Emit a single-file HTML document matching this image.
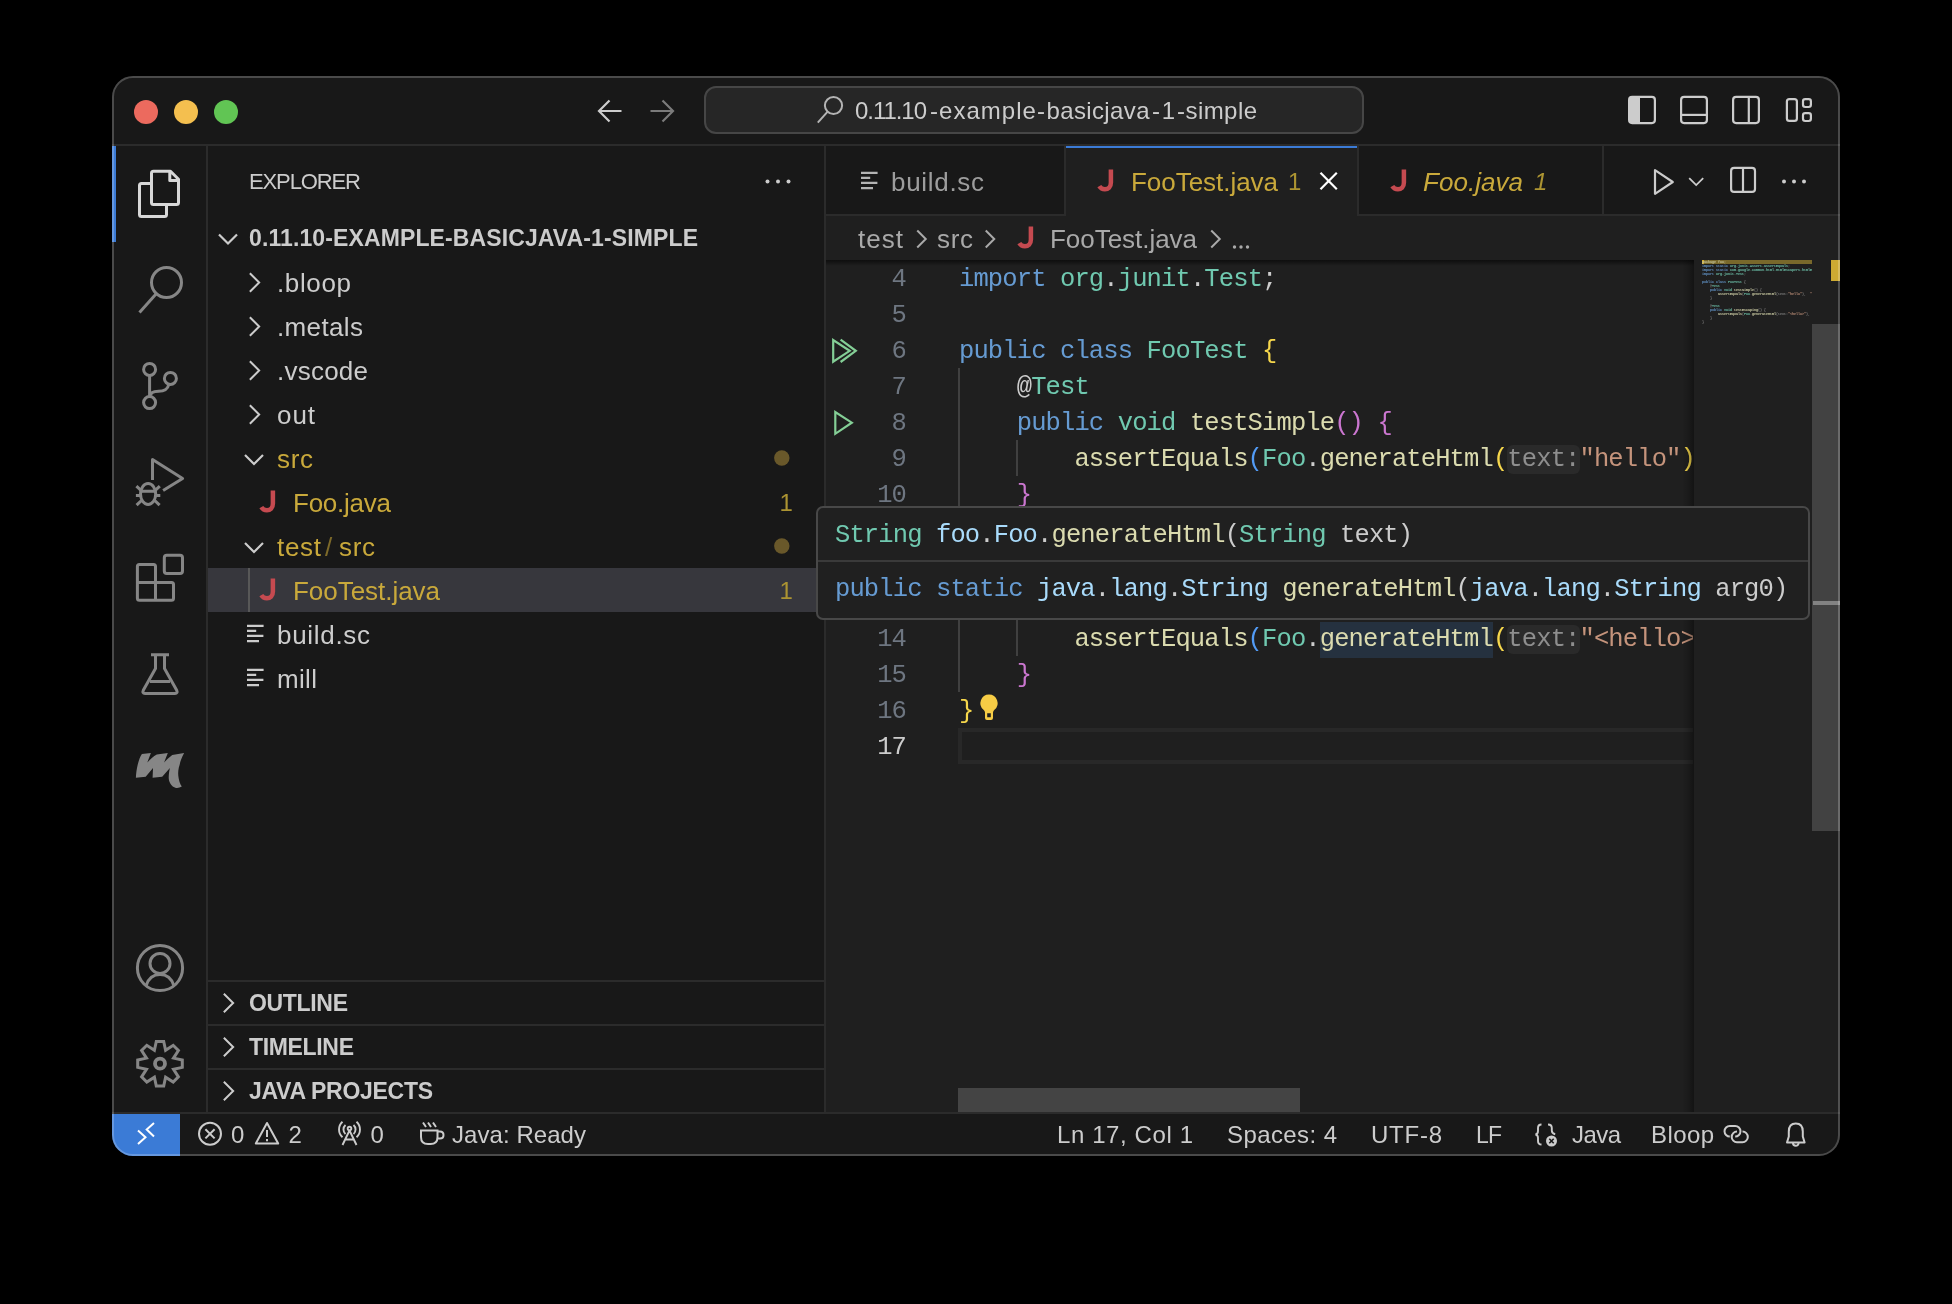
<!DOCTYPE html>
<html><head><meta charset="utf-8"><title>VS Code</title><style>
html,body{margin:0;padding:0;background:#000;}
body{width:1952px;height:1304px;overflow:hidden;position:relative;font-family:"Liberation Sans",sans-serif;}
#c{position:absolute;left:0;top:0;width:1952px;height:1304px;will-change:transform;clip-path:inset(76px 112px 148px 112px round 21px);}
#c>div,#c>span,#c>svg{position:absolute;}
.t{white-space:pre;display:block;}
.m{font-family:"Liberation Mono",monospace;}
.hint{background:#2a2a2a;color:#8e8e8e;border-radius:6px;}
.sym{background:#25313f;display:inline-block;height:36px;}
#f{position:absolute;left:112px;top:76px;width:1728px;height:1080px;box-sizing:border-box;border:2px solid rgba(255,255,255,.22);border-radius:21px;}
</style></head><body>
<div id="c">
<div style="left:112px;top:76px;width:1728px;height:1080px;background:#181818;"></div>
<div style="left:112px;top:144px;width:1728px;height:2px;background:#2b2b2b;"></div>
<div style="left:206px;top:146px;width:2px;height:966px;background:#2b2b2b;"></div>
<div style="left:824px;top:146px;width:2px;height:966px;background:#2b2b2b;"></div>
<div style="left:826px;top:146px;width:1014px;height:70px;background:#181818;"></div>
<div style="left:826px;top:214px;width:1014px;height:2px;background:#2b2b2b;"></div>
<div style="left:826px;top:216px;width:1014px;height:896px;background:#1f1f1f;"></div>
<div style="left:112px;top:1112px;width:1728px;height:2px;background:#2b2b2b;"></div>
<div style="left:112px;top:146px;width:4px;height:96px;background:#3b7bd6;"></div>
<div style="left:134px;top:100px;width:24px;height:24px;border-radius:50%;background:#ec6a5e"></div>
<div style="left:174px;top:100px;width:24px;height:24px;border-radius:50%;background:#f4bf4f"></div>
<div style="left:214px;top:100px;width:24px;height:24px;border-radius:50%;background:#61c554"></div>
<div style="left:704px;top:86px;width:660px;height:48px;box-sizing:border-box;border:2px solid #464646;border-radius:12px;background:#262626"></div>
<span id="t0" class="t" style="left:855px;top:93.0px;height:36px;line-height:36px;font-size:24px;color:#cccccc;letter-spacing:-1.049px;">0.11.10</span>
<span id="t1" class="t" style="left:930px;top:93.0px;height:36px;line-height:36px;font-size:24px;color:#cccccc;letter-spacing:1.037px;">-example-</span>
<span id="t2" class="t" style="left:1046.5px;top:93.0px;height:36px;line-height:36px;font-size:24px;color:#cccccc;letter-spacing:0.367px;">basicjava</span>
<span id="t3" class="t" style="left:1152px;top:93.0px;height:36px;line-height:36px;font-size:24px;color:#cccccc;letter-spacing:1.828px;">-1-</span>
<span id="t4" class="t" style="left:1185.5px;top:93.0px;height:36px;line-height:36px;font-size:24px;color:#cccccc;letter-spacing:0.428px;">simple</span>
<span id="t5" class="t" style="left:249px;top:164.5px;height:33px;line-height:33px;font-size:22px;color:#cccccc;letter-spacing:-1.118px;">EXPLORER</span>
<span id="t6" class="t" style="left:249px;top:220.7px;height:34px;line-height:34px;font-size:23px;color:#cccccc;font-weight:700;letter-spacing:0.115px;">0.11.10-EXAMPLE-BASICJAVA-1-SIMPLE</span>
<span id="t7" class="t" style="left:277px;top:263.5px;height:39px;line-height:39px;font-size:26px;color:#cccccc;letter-spacing:0.631px;">.bloop</span>
<span id="t8" class="t" style="left:277px;top:307.5px;height:39px;line-height:39px;font-size:26px;color:#cccccc;letter-spacing:0.365px;">.metals</span>
<span id="t9" class="t" style="left:277px;top:351.5px;height:39px;line-height:39px;font-size:26px;color:#cccccc;letter-spacing:0.232px;">.vscode</span>
<span id="t10" class="t" style="left:277px;top:395.5px;height:39px;line-height:39px;font-size:26px;color:#cccccc;letter-spacing:0.922px;">out</span>
<span id="t11" class="t" style="left:277px;top:439.5px;height:39px;line-height:39px;font-size:26px;color:#c9a93b;letter-spacing:0.664px;">src</span>
<div style="left:208px;top:568px;width:616px;height:44px;background:#37373d;"></div>
<div style="left:248px;top:568px;width:2px;height:44px;background:#585858;"></div>
<span id="t12" class="t" style="left:277px;top:527.5px;height:39px;line-height:39px;font-size:26px;color:#c9a93b;letter-spacing:0.693px;">test</span>
<span id="t13" class="t" style="left:325px;top:527.5px;height:39px;line-height:39px;font-size:26px;color:#7d6a2a;">/</span>
<span id="t14" class="t" style="left:339px;top:527.5px;height:39px;line-height:39px;font-size:26px;color:#c9a93b;letter-spacing:0.664px;">src</span>
<span id="t15" class="t" style="left:293px;top:483.5px;height:39px;line-height:39px;font-size:26px;color:#c9a93b;letter-spacing:-0.248px;">Foo.java</span>
<span id="t16" class="t" style="left:293px;top:571.5px;height:39px;line-height:39px;font-size:26px;color:#c9a93b;letter-spacing:-0.037px;">FooTest.java</span>
<span id="t17" class="t" style="left:277px;top:615.5px;height:39px;line-height:39px;font-size:26px;color:#cccccc;letter-spacing:0.692px;">build.sc</span>
<span id="t18" class="t" style="left:277px;top:659.5px;height:39px;line-height:39px;font-size:26px;color:#cccccc;letter-spacing:0.333px;">mill</span>
<span id="t19" class="t" style="left:779.5px;top:485.0px;height:36px;line-height:36px;font-size:24px;color:#ac9432;">1</span>
<span id="t20" class="t" style="left:779.5px;top:573.0px;height:36px;line-height:36px;font-size:24px;color:#ac9432;">1</span>
<div style="left:208px;top:980px;width:616px;height:2px;background:#2b2b2b;"></div>
<span id="t21" class="t" style="left:249px;top:985.7px;height:34px;line-height:34px;font-size:23px;color:#cccccc;font-weight:700;letter-spacing:-0.326px;">OUTLINE</span>
<div style="left:208px;top:1024px;width:616px;height:2px;background:#2b2b2b;"></div>
<span id="t22" class="t" style="left:249px;top:1029.7px;height:34px;line-height:34px;font-size:23px;color:#cccccc;font-weight:700;letter-spacing:-0.335px;">TIMELINE</span>
<div style="left:208px;top:1068px;width:616px;height:2px;background:#2b2b2b;"></div>
<span id="t23" class="t" style="left:249px;top:1073.7px;height:34px;line-height:34px;font-size:23px;color:#cccccc;font-weight:700;letter-spacing:-0.288px;">JAVA PROJECTS</span>
<div style="left:1064px;top:146px;width:2px;height:68px;background:#2b2b2b;"></div>
<div style="left:1066px;top:146px;width:291px;height:70px;background:#1f1f1f;"></div>
<div style="left:1066px;top:146px;width:291px;height:2px;background:#3b7bd6;"></div>
<div style="left:1357px;top:146px;width:2px;height:68px;background:#2b2b2b;"></div>
<div style="left:1602px;top:146px;width:2px;height:68px;background:#2b2b2b;"></div>
<span id="t24" class="t" style="left:891px;top:162.5px;height:39px;line-height:39px;font-size:26px;color:#9d9d9d;letter-spacing:0.692px;">build.sc</span>
<span id="t25" class="t" style="left:1131px;top:162.5px;height:39px;line-height:39px;font-size:26px;color:#c9a93b;letter-spacing:-0.037px;">FooTest.java</span>
<span id="t26" class="t" style="left:1288px;top:164.0px;height:36px;line-height:36px;font-size:24px;color:#ac9432;">1</span>
<span id="t27" class="t" style="left:1423px;top:162.5px;height:39px;line-height:39px;font-size:26px;color:#c9a93b;font-style:italic;letter-spacing:0.038px;">Foo.java</span>
<span id="t28" class="t" style="left:1534px;top:164.0px;height:36px;line-height:36px;font-size:24px;color:#ac9432;font-style:italic;">1</span>
<span id="t29" class="t" style="left:858px;top:219.5px;height:39px;line-height:39px;font-size:26px;color:#a9a9a9;letter-spacing:1.026px;">test</span>
<span id="t30" class="t" style="left:937px;top:219.5px;height:39px;line-height:39px;font-size:26px;color:#a9a9a9;letter-spacing:0.664px;">src</span>
<span id="t31" class="t" style="left:1050px;top:219.5px;height:39px;line-height:39px;font-size:26px;color:#a9a9a9;letter-spacing:-0.037px;">FooTest.java</span>
<div style="left:958px;top:728px;width:735px;height:36px;box-sizing:border-box;border:4px solid #282828;border-right:none"></div>
<div style="left:958px;top:368px;width:2px;height:324px;background:#404040;"></div>
<div style="left:1016px;top:440px;width:2px;height:36px;background:#404040;"></div>
<div style="left:1016px;top:620px;width:2px;height:36px;background:#404040;"></div>
<span class="t m" style="left:826px;width:80px;text-align:right;top:262px;height:36px;line-height:36px;font-size:25.5px;letter-spacing:-0.874px;color:#6e7681">4</span>
<span class="t m code" style="left:959px;top:262px;height:36px;line-height:36px;font-size:25.5px;letter-spacing:-0.874px;width:734px;overflow:hidden;color:#cccccc"><span style="color:#669bd2">import</span> <span style="color:#70c9b0">org</span><span style="color:#cccccc">.</span><span style="color:#70c9b0">junit</span><span style="color:#cccccc">.</span><span style="color:#70c9b0">Test</span><span style="color:#cccccc">;</span></span>
<span class="t m" style="left:826px;width:80px;text-align:right;top:298px;height:36px;line-height:36px;font-size:25.5px;letter-spacing:-0.874px;color:#6e7681">5</span>
<span class="t m" style="left:826px;width:80px;text-align:right;top:334px;height:36px;line-height:36px;font-size:25.5px;letter-spacing:-0.874px;color:#6e7681">6</span>
<span class="t m code" style="left:959px;top:334px;height:36px;line-height:36px;font-size:25.5px;letter-spacing:-0.874px;width:734px;overflow:hidden;color:#cccccc"><span style="color:#669bd2">public class</span> <span style="color:#70c9b0">FooTest</span> <span style="color:#f6d74c">{</span></span>
<span class="t m" style="left:826px;width:80px;text-align:right;top:370px;height:36px;line-height:36px;font-size:25.5px;letter-spacing:-0.874px;color:#6e7681">7</span>
<span class="t m code" style="left:959px;top:370px;height:36px;line-height:36px;font-size:25.5px;letter-spacing:-0.874px;width:734px;overflow:hidden;color:#cccccc">    <span style="color:#cccccc">@</span><span style="color:#70c9b0">Test</span></span>
<span class="t m" style="left:826px;width:80px;text-align:right;top:406px;height:36px;line-height:36px;font-size:25.5px;letter-spacing:-0.874px;color:#6e7681">8</span>
<span class="t m code" style="left:959px;top:406px;height:36px;line-height:36px;font-size:25.5px;letter-spacing:-0.874px;width:734px;overflow:hidden;color:#cccccc">    <span style="color:#669bd2">public</span> <span style="color:#70c9b0">void</span> <span style="color:#dbdbaf">testSimple</span><span style="color:#cb76d0">()</span> <span style="color:#cb76d0">{</span></span>
<span class="t m" style="left:826px;width:80px;text-align:right;top:442px;height:36px;line-height:36px;font-size:25.5px;letter-spacing:-0.874px;color:#6e7681">9</span>
<span class="t m code" style="left:959px;top:442px;height:36px;line-height:36px;font-size:25.5px;letter-spacing:-0.874px;width:734px;overflow:hidden;color:#cccccc">        <span style="color:#dbdbaf">assertEquals</span><span style="color:#529bf5">(</span><span style="color:#70c9b0">Foo</span><span style="color:#cccccc">.</span><span style="color:#dbdbaf">generateHtml</span><span style="color:#f6d74c">(</span><span class="hint">text:</span><span style="color:#c5947c">&quot;hello&quot;</span><span style="color:#f6d74c">)</span><span style="color:#cccccc">, </span><span style="color:#c5947c">&quot;&lt;h1&gt;hello&lt;/h1&gt;&quot;</span><span style="color:#529bf5">)</span><span style="color:#cccccc">;</span></span>
<span class="t m" style="left:826px;width:80px;text-align:right;top:478px;height:36px;line-height:36px;font-size:25.5px;letter-spacing:-0.874px;color:#6e7681">10</span>
<span class="t m code" style="left:959px;top:478px;height:36px;line-height:36px;font-size:25.5px;letter-spacing:-0.874px;width:734px;overflow:hidden;color:#cccccc">    <span style="color:#cb76d0">}</span></span>
<span class="t m" style="left:826px;width:80px;text-align:right;top:514px;height:36px;line-height:36px;font-size:25.5px;letter-spacing:-0.874px;color:#6e7681">11</span>
<span class="t m" style="left:826px;width:80px;text-align:right;top:550px;height:36px;line-height:36px;font-size:25.5px;letter-spacing:-0.874px;color:#6e7681">12</span>
<span class="t m" style="left:826px;width:80px;text-align:right;top:586px;height:36px;line-height:36px;font-size:25.5px;letter-spacing:-0.874px;color:#6e7681">13</span>
<span class="t m" style="left:826px;width:80px;text-align:right;top:622px;height:36px;line-height:36px;font-size:25.5px;letter-spacing:-0.874px;color:#6e7681">14</span>
<span class="t m code" style="left:959px;top:622px;height:36px;line-height:36px;font-size:25.5px;letter-spacing:-0.874px;width:734px;overflow:hidden;color:#cccccc">        <span style="color:#dbdbaf">assertEquals</span><span style="color:#529bf5">(</span><span style="color:#70c9b0">Foo</span><span style="color:#cccccc">.</span><span class="sym"><span style="color:#dbdbaf">generateHtml</span></span><span style="color:#f6d74c">(</span><span class="hint">text:</span><span style="color:#c5947c">&quot;&lt;hello&gt;&quot;</span><span style="color:#f6d74c">)</span><span style="color:#cccccc">, </span><span style="color:#c5947c">&quot;&lt;h1&gt;&amp;lt;hello&amp;gt;&lt;/h1&gt;&quot;</span><span style="color:#529bf5">)</span><span style="color:#cccccc">;</span></span>
<span class="t m" style="left:826px;width:80px;text-align:right;top:658px;height:36px;line-height:36px;font-size:25.5px;letter-spacing:-0.874px;color:#6e7681">15</span>
<span class="t m code" style="left:959px;top:658px;height:36px;line-height:36px;font-size:25.5px;letter-spacing:-0.874px;width:734px;overflow:hidden;color:#cccccc">    <span style="color:#cb76d0">}</span></span>
<span class="t m" style="left:826px;width:80px;text-align:right;top:694px;height:36px;line-height:36px;font-size:25.5px;letter-spacing:-0.874px;color:#6e7681">16</span>
<span class="t m code" style="left:959px;top:694px;height:36px;line-height:36px;font-size:25.5px;letter-spacing:-0.874px;width:734px;overflow:hidden;color:#cccccc"><span style="color:#f6d74c">}</span></span>
<span class="t m" style="left:826px;width:80px;text-align:right;top:730px;height:36px;line-height:36px;font-size:25.5px;letter-spacing:-0.874px;color:#cccccc">17</span>
<div style="left:826px;top:260px;width:986px;height:6px;background:linear-gradient(#0000008c,#00000000)"></div>
<div style="left:1682px;top:260px;width:12px;height:852px;background:linear-gradient(90deg,#00000000,#00000026 50%,#00000060)"></div>
<div style="left:1694px;top:260px;width:118px;height:852px;background:#1f1f1f;"></div>
<div style="left:1812px;top:324px;width:28px;height:507px;background:#424242;"></div>
<div style="left:1831px;top:260px;width:9px;height:21px;background:#cdaa32;"></div>
<div style="left:1813px;top:601px;width:27px;height:4px;background:#828282;"></div>
<div style="left:958px;top:1088px;width:342px;height:24px;background:#444444;"></div>
<div style="left:1702px;top:260px;width:110px;height:4px;background:#78682b;"></div>
<div style="left:1702px;top:260px;width:2px;height:4px;background:#d0aa2c;"></div>
<div style="left:1702px;top:260px;width:110px;height:70px;overflow:hidden"><div class="m" style="transform:scale(.13889);transform-origin:0 0;width:1400px;white-space:pre;font-size:24px;line-height:28.8px;font-weight:700;opacity:.95"><span style="color:#c9c9a0">package foo;</span>
<span style="color:#669bd2">import static</span> <span style="color:#70c9b0">org.junit.Assert.assertEquals</span><span style="color:#888888">;</span>
<span style="color:#669bd2">import static</span> <span style="color:#70c9b0">com.google.common.html.HtmlEscapers.htmlEscaper</span><span style="color:#888888">;</span>
<span style="color:#669bd2">import</span> <span style="color:#70c9b0">org.junit.Test</span><span style="color:#888888">;</span>

<span style="color:#669bd2">public class</span> <span style="color:#70c9b0">FooTest</span> <span style="color:#888888">{</span>
    <span style="color:#888888">@</span><span style="color:#70c9b0">Test</span>
    <span style="color:#669bd2">public</span> <span style="color:#70c9b0">void</span> <span style="color:#dbdbaf">testSimple</span><span style="color:#888888">() {</span>
        <span style="color:#dbdbaf">assertEquals</span><span style="color:#888888">(</span><span style="color:#70c9b0">Foo</span><span style="color:#888888">.</span><span style="color:#dbdbaf">generateHtml</span><span style="color:#888888">(text:</span><span style="color:#c5947c">&quot;hello&quot;</span><span style="color:#888888">),</span>  <span style="color:#c5947c">&quot;&lt;h1&gt;hello&lt;/h1&gt;&quot;</span><span style="color:#888888">);</span>
    <span style="color:#888888">}</span>

    <span style="color:#888888">@</span><span style="color:#70c9b0">Test</span>
    <span style="color:#669bd2">public</span> <span style="color:#70c9b0">void</span> <span style="color:#dbdbaf">testEscaping</span><span style="color:#888888">() {</span>
        <span style="color:#dbdbaf">assertEquals</span><span style="color:#888888">(</span><span style="color:#70c9b0">Foo</span><span style="color:#888888">.</span><span style="color:#dbdbaf">generateHtml</span><span style="color:#888888">(text:</span><span style="color:#c5947c">&quot;&lt;hello&gt;&quot;</span><span style="color:#888888">),</span> <span style="color:#c5947c">&quot;&lt;h1&gt;&amp;lt;hello&amp;gt;&lt;/h1&gt;&quot;</span><span style="color:#888888">);</span>
    <span style="color:#888888">}</span>
<span style="color:#888888">}</span></div></div>
<div style="left:816px;top:506px;width:994px;height:114px;box-sizing:border-box;border:2px solid #484848;border-radius:7px;background:#202020"></div>
<div style="left:818px;top:560px;width:990px;height:2px;background:#3a3a3a;"></div>
<span class="t m" style="left:835px;top:518px;height:36px;line-height:36px;font-size:25.5px;letter-spacing:-0.874px;color:#cccccc"><span style="color:#70c9b0">String</span> <span style="color:#a9dbfb">foo</span><span style="color:#cccccc">.</span><span style="color:#a9dbfb">Foo</span><span style="color:#cccccc">.</span><span style="color:#dbdbaf">generateHtml</span><span style="color:#cccccc">(</span><span style="color:#70c9b0">String</span><span style="color:#cccccc"> text)</span></span>
<span class="t m" style="left:835px;top:572px;height:36px;line-height:36px;font-size:25.5px;letter-spacing:-0.874px;color:#cccccc"><span style="color:#669bd2">public static</span> <span style="color:#a9dbfb">java</span><span style="color:#cccccc">.</span><span style="color:#a9dbfb">lang</span><span style="color:#cccccc">.</span><span style="color:#a9dbfb">String</span> <span style="color:#dbdbaf">generateHtml</span><span style="color:#cccccc">(</span><span style="color:#a9dbfb">java</span><span style="color:#cccccc">.</span><span style="color:#a9dbfb">lang</span><span style="color:#cccccc">.</span><span style="color:#a9dbfb">String</span><span style="color:#cccccc"> arg0)</span></span>
<div style="left:112px;top:1114px;width:68px;height:42px;background:#3b7bd6;"></div>
<span id="t32" class="t" style="left:231px;top:1117.0px;height:36px;line-height:36px;font-size:24px;color:#cccccc;">0</span>
<span id="t33" class="t" style="left:288.5px;top:1117.0px;height:36px;line-height:36px;font-size:24px;color:#cccccc;">2</span>
<span id="t34" class="t" style="left:370.5px;top:1117.0px;height:36px;line-height:36px;font-size:24px;color:#cccccc;">0</span>
<span id="t35" class="t" style="left:452px;top:1117.0px;height:36px;line-height:36px;font-size:24px;color:#cccccc;letter-spacing:0.059px;">Java: Ready</span>
<span id="t36" class="t" style="left:1057px;top:1117.0px;height:36px;line-height:36px;font-size:24px;color:#cccccc;letter-spacing:0.598px;">Ln 17, Col 1</span>
<span id="t37" class="t" style="left:1227px;top:1117.0px;height:36px;line-height:36px;font-size:24px;color:#cccccc;letter-spacing:0.408px;">Spaces: 4</span>
<span id="t38" class="t" style="left:1371px;top:1117.0px;height:36px;line-height:36px;font-size:24px;color:#cccccc;letter-spacing:0.750px;">UTF-8</span>
<span id="t39" class="t" style="left:1476px;top:1118.0px;height:34px;line-height:34px;font-size:23px;color:#cccccc;letter-spacing:-0.844px;">LF</span>
<span id="t40" class="t" style="left:1572px;top:1117.0px;height:36px;line-height:36px;font-size:24px;color:#cccccc;letter-spacing:-0.568px;">Java</span>
<span id="t41" class="t" style="left:1651px;top:1117.0px;height:36px;line-height:36px;font-size:24px;color:#cccccc;letter-spacing:0.402px;">Bloop</span>
<svg width="1952" height="1304" viewBox="0 0 1952 1304" style="left:0;top:0" stroke-linecap="butt">
<path d="M621.5 111H599.5M609.5 100.5L599 111L609.5 121.5" stroke="#cccccc" stroke-width="2.2" fill="none"/>
<path d="M650.5 111H672.5M662.5 100.5L673 111L662.5 121.5" stroke="#7b7b7b" stroke-width="2.2" fill="none"/>
<circle cx="833.5" cy="105.5" r="8.6" stroke="#b4b4b4" stroke-width="2" fill="none"/><path d="M827.4 111.8L817.8 122.6" stroke="#b4b4b4" stroke-width="2"/>
<rect x="1629.1" y="96.9" width="25.8" height="26.2" rx="3" stroke="#cccccc" stroke-width="2.2" fill="none"/><path d="M1629 98h11v24h-11z" fill="#cccccc"/>
<rect x="1681.1" y="96.9" width="25.8" height="26.2" rx="3" stroke="#cccccc" stroke-width="2.2" fill="none"/><path d="M1681 114.900h26" stroke="#cccccc" stroke-width="2.2"/>
<rect x="1733.1" y="96.9" width="25.8" height="26.2" rx="3" stroke="#cccccc" stroke-width="2.2" fill="none"/><path d="M1748.800 97v26" stroke="#cccccc" stroke-width="2.2"/>
<rect x="1786.9" y="99.1" width="10" height="21.8" rx="2.5" stroke="#cccccc" stroke-width="2.2" fill="none"/><rect x="1803" y="99.1" width="7.9" height="7.9" rx="2.2" stroke="#cccccc" stroke-width="2.2" fill="none"/><rect x="1803" y="113.1" width="7.9" height="7.9" rx="2.2" stroke="#cccccc" stroke-width="2.2" fill="none"/>
<path d="M153.5 171.3H170.5L178.5 179.3V202.5Q178.5 204.5 176.5 204.5H153.5Q151.5 204.5 151.5 202.5V173.3Q151.5 171.3 153.5 171.3ZM169.8 171.5V180.5H178.3" stroke="#d7d7d7" stroke-width="3" fill="none" stroke-linejoin="round"/><path d="M151 183.5H141.5Q139.5 183.5 139.5 185.5V214.5Q139.5 216.5 141.5 216.5H164.5Q166.5 216.5 166.5 214.5V205" stroke="#d7d7d7" stroke-width="3" fill="none"/>
<circle cx="166.5" cy="282.5" r="15" stroke="#868686" stroke-width="3" fill="none"/><path d="M156 294L139.5 312.5" stroke="#868686" stroke-width="3"/>
<g stroke="#868686" stroke-width="3" fill="none"><circle cx="149.6" cy="369.4" r="6"/><circle cx="149.6" cy="402.6" r="6"/><circle cx="170.4" cy="378.4" r="6"/><path d="M149.6 375.5V396.5M168.8 384.5C167.5 390.5 163 391.2 158.5 391.2C153.5 391.2 150 393 149.8 397"/></g>
<g stroke="#868686" stroke-width="3" fill="none" stroke-linejoin="round"><path d="M152.500 480V459.600L182.600 478.400L163.100 490.500"/><ellipse cx="148.1" cy="494" rx="7.6" ry="10.5"/><path d="M140.700 491.200H155.500M135.900 495.500H140.500M155.700 495.500H160.300M136.400 486.100L141 490.400M159.800 486.100L155.200 490.400M136.600 505.200L142 500M159.600 505.200L154.200 500"/></g>
<g stroke="#868686" stroke-width="3" fill="none" stroke-linejoin="round"><path d="M139.4 564.5H153.5Q155.5 564.5 155.5 566.5V582.5H171.5Q173.5 582.5 173.5 584.5V598.3Q173.5 600.3 171.5 600.3H139.4Q137.4 600.3 137.4 598.3V566.5Q137.4 564.5 139.4 564.5ZM137.4 582.5H155.5V600.3"/><rect x="164.3" y="555.3" width="18.2" height="18.1" rx="2.5"/></g>
<g stroke="#868686" stroke-width="3" fill="none" stroke-linejoin="round"><path d="M151 654.7H169M155.5 655V668.5L143.3 690.3Q142 693.4 145 693.4H175Q178 693.4 176.7 690.3L164.5 668.5V655M150 681.5H170"/></g>
<path d="M135.9 777.8C136.3 769 138.5 759 141.9 754L150.9 753.1L147.3 762.6C150 759.5 153.5 756.5 156.8 754.6L167.8 753.1L164.1 762.6C166.5 759.8 169.5 757 172.2 755L184.1 753.1C181.5 758 180.2 761.5 179.8 764.2C178.2 769 178 772.5 178.3 775.7C178.8 780.5 180 784 181.8 786.6C180 787.8 178 788.1 176 787.9C173.5 787.3 171.7 786 170.6 784.1C169.2 781.8 168.7 779.8 168.7 777.600C168.7 774.5 169.2 771 169.9 768L162.2 776.8L152.6 777.8L153 768L145.7 776.8Z" fill="#868686"/>
<g stroke="#868686" stroke-width="3" fill="none"><circle cx="160" cy="968" r="22.6"/><circle cx="160" cy="963.4" r="10"/><path d="M146.2 985.5C148.5 978.5 153.5 974.6 160 974.6C166.5 974.6 171.5 978.5 173.8 985.5"/></g>
<g stroke="#868686" stroke-width="3" fill="none" stroke-linejoin="miter"><path d="M154.4 1050.2L156.3 1041.4L163.7 1041.4L165.6 1050.2L165.6 1050.2L173.2 1045.3L178.4 1050.5L173.5 1058.1L173.5 1058.1L182.3 1060.0L182.3 1067.4L173.5 1069.3L173.5 1069.3L178.4 1076.9L173.2 1082.1L165.6 1077.2L165.6 1077.2L163.7 1086.0L156.3 1086.0L154.4 1077.2L154.4 1077.2L146.8 1082.1L141.6 1076.9L146.5 1069.3L146.5 1069.3L137.7 1067.4L137.7 1060.0L146.5 1058.1L146.5 1058.1L141.6 1050.5L146.8 1045.3L154.4 1050.2Z"/><circle cx="160" cy="1063.7" r="5" stroke-width="3.8"/></g>
<circle cx="767.5" cy="181.5" r="2" fill="#ccc"/><circle cx="778" cy="181.5" r="2" fill="#ccc"/><circle cx="788.5" cy="181.5" r="2" fill="#ccc"/>
<path d="M219 234.5L228 243.5L237 234.5" stroke="#cccccc" stroke-width="2.2" fill="none"/>
<path d="M249.85 273.2L259.15 282.5L249.85 291.8" stroke="#cccccc" stroke-width="2" fill="none"/>
<path d="M249.85 317.2L259.15 326.5L249.85 335.8" stroke="#cccccc" stroke-width="2" fill="none"/>
<path d="M249.85 361.2L259.15 370.5L249.85 379.8" stroke="#cccccc" stroke-width="2" fill="none"/>
<path d="M249.85 405.2L259.15 414.5L249.85 423.8" stroke="#cccccc" stroke-width="2" fill="none"/>
<path d="M245 455.0L254 464.0L263 455.0" stroke="#cccccc" stroke-width="2.2" fill="none"/>
<path d="M245 543.0L254 552.0L263 543.0" stroke="#cccccc" stroke-width="2.2" fill="none"/>
<path d="M272.9 490.4V503.5C272.9 508.3 270.2 510.3 266.9 510.3C264.2 510.3 262.5 509.2 261.3 507.2" stroke="#c54a50" stroke-width="4.5" fill="none"/>
<path d="M272.9 578.4V591.5C272.9 596.3 270.2 598.3 266.9 598.3C264.2 598.3 262.5 597.2 261.3 595.2" stroke="#c54a50" stroke-width="4.5" fill="none"/>
<path d="M247 625.8H263.6M247 630.8H256.2M247 635.9H263.4M247 641.1H259" stroke="#cccccc" stroke-width="2.3"/>
<path d="M247 669.8H263.6M247 674.8H256.2M247 679.9H263.4M247 685.1H259" stroke="#cccccc" stroke-width="2.3"/>
<circle cx="781.8" cy="458" r="7.7" fill="#69582a"/><circle cx="781.8" cy="546" r="7.7" fill="#69582a"/>
<path d="M223.85 993.7L233.15 1003L223.85 1012.3" stroke="#cccccc" stroke-width="2" fill="none"/>
<path d="M223.85 1037.7L233.15 1047L223.85 1056.3" stroke="#cccccc" stroke-width="2" fill="none"/>
<path d="M223.85 1081.7L233.15 1091L223.85 1100.3" stroke="#cccccc" stroke-width="2" fill="none"/>
<path d="M861 172.8H877.6M861 177.8H870.2M861 182.9H877.4M861 188.1H873" stroke="#b4b4b4" stroke-width="2.3"/>
<path d="M1110.9 169.4V182.5C1110.9 187.3 1108.2 189.3 1104.9 189.3C1102.2 189.3 1100.5 188.2 1099.3 186.2" stroke="#c54a50" stroke-width="4.5" fill="none"/>
<path d="M1320.500 172.800L1336.800 189.200M1336.800 172.800L1320.500 189.200" stroke="#ffffff" stroke-width="2.2"/>
<path d="M1403.9 169.4V182.5C1403.9 187.3 1401.2 189.3 1397.9 189.3C1395.2 189.3 1393.5 188.2 1392.3 186.2" stroke="#c54a50" stroke-width="4.5" fill="none"/>
<path d="M1655 170.200V193.800L1672.800 182Z" stroke="#cccccc" stroke-width="2.2" fill="none" stroke-linejoin="round"/>
<path d="M1689.2 178.1L1696.2 185.1L1703.2 178.1" stroke="#cccccc" stroke-width="1.8" fill="none"/>
<rect x="1731.1" y="167.9" width="23.9" height="24" rx="3" stroke="#cccccc" stroke-width="2.2" fill="none"/><path d="M1743 168v24" stroke="#cccccc" stroke-width="2.2"/>
<circle cx="1784" cy="181.5" r="2" fill="#ccc"/><circle cx="1794" cy="181.5" r="2" fill="#ccc"/><circle cx="1804" cy="181.5" r="2" fill="#ccc"/>
<path d="M917.25 230.5L925.75 239L917.25 247.5" stroke="#a9a9a9" stroke-width="2" fill="none"/>
<path d="M985.75 230.5L994.25 239L985.75 247.5" stroke="#a9a9a9" stroke-width="2" fill="none"/>
<path d="M1030.9 226.4V239.5C1030.9 244.3 1028.2 246.3 1024.9 246.3C1022.2 246.3 1020.5 245.2 1019.3 243.2" stroke="#c54a50" stroke-width="4.5" fill="none"/>
<path d="M1211.25 230.5L1219.75 239L1211.25 247.5" stroke="#a9a9a9" stroke-width="2" fill="none"/>
<circle cx="1234.5" cy="247" r="1.7" fill="#a9a9a9"/><circle cx="1241" cy="247" r="1.7" fill="#a9a9a9"/><circle cx="1247.5" cy="247" r="1.7" fill="#a9a9a9"/>
<g stroke="#84cf96" stroke-width="2.2" fill="none" stroke-linejoin="miter"><path d="M833.2 340V361.700L849.700 350.800Z"/><path d="M840.600 339.700L855.800 350.800L840.600 362"/></g>
 <path d="M835.300 412V433.800L851.800 422.700Z" stroke="#84cf96" stroke-width="2.2" fill="none"/>
<path d="M989 694.5a8.6 8.6 0 0 0-5.5 15.2c1 .9 1.5 1.8 1.5 3v5.3a2 2 0 0 0 2 2h4a2 2 0 0 0 2-2v-5.3c0-1.200.5-2.100 1.500-3a8.600 8.600 0 0 0-5.500-15.200zm-1.800 18.800h3.600v4h-3.600z" fill="#f6cc45" fill-rule="evenodd"/>
<path d="M138 1130.5L145.5 1137.2L138 1144M154 1123L146.7 1129.6L154 1136.5" stroke="#ffffff" stroke-width="2" fill="none"/>
<g stroke="#cccccc" stroke-width="2" fill="none"><circle cx="210" cy="1133.8" r="11"/><path d="M205.400 1129.200L214.600 1138.400M214.600 1129.200L205.400 1138.400"/></g>
<g stroke="#cccccc" stroke-width="2" fill="none" stroke-linejoin="round"><path d="M267 1123L278.200 1143.500H255.800Z"/><path d="M267 1130V1137M267 1139V1141.200"/></g>
<g stroke="#cccccc" stroke-width="1.9" fill="none"><circle cx="349.5" cy="1128.5" r="1.8"/><path d="M349.5 1130.5L342.500 1145M349.5 1130.5L356.500 1145M345.300 1139.500H353.700"/><path d="M345.500 1134A6 6 0 0 1 345.500 1125M353.500 1134A6 6 0 0 0 353.500 1125M342.500 1137.300A10.500 10.500 0 0 1 342.500 1121.700M356.500 1137.300A10.500 10.500 0 0 0 356.500 1121.700"/></g>
<g stroke="#cccccc" stroke-width="2" fill="none"><path d="M421 1130.500H437.500V1137Q437.500 1144 430.500 1144H428Q421 1144 421 1137ZM437.500 1131.500H440Q443.500 1131.500 443.500 1135Q443.500 1138.500 440 1138.500H437.500"/><path d="M423 1122.500L426 1127M428 1122.500L431 1127M433 1122.500L436 1127"/></g>
<g stroke="#cccccc" stroke-width="1.9" fill="none"><path d="M1541.500 1124.500Q1538 1124.500 1538 1128V1131Q1538 1134 1535.500 1134.500Q1538 1135 1538 1138V1141Q1538 1144.500 1541.500 1144.500M1548 1124.500Q1551.800 1124.500 1551.800 1128V1130.500Q1551.800 1133.500 1555.200 1134.200"/></g><circle cx="1551.500" cy="1141" r="5.500" fill="#cccccc"/><path d="M1549.300 1138.800L1553.700 1143.200M1553.700 1138.800L1549.300 1143.200" stroke="#181818" stroke-width="1.600"/>
<g stroke="#cccccc" stroke-width="2" fill="none"><path d="M1729.800 1136.500A5.300 5.300 0 0 1 1729.800 1125.900H1735.200A5.300 5.300 0 0 1 1735.200 1136.500"/><path d="M1742.500 1131.600A5.300 5.300 0 0 1 1742.500 1142.200H1737A5.300 5.300 0 0 1 1737 1131.600"/></g>
<g stroke="#cccccc" stroke-width="2" fill="none" stroke-linejoin="round"><path d="M1787 1142.500L1788.800 1136.500V1131.500Q1788.800 1123.500 1795.800 1123.500Q1802.800 1123.500 1802.800 1131.500V1136.500L1804.600 1142.500Z"/><path d="M1793 1143A2.800 2.800 0 0 0 1798.600 1143"/></g>
</svg>
</div>
<div id="f"></div>
</body></html>
